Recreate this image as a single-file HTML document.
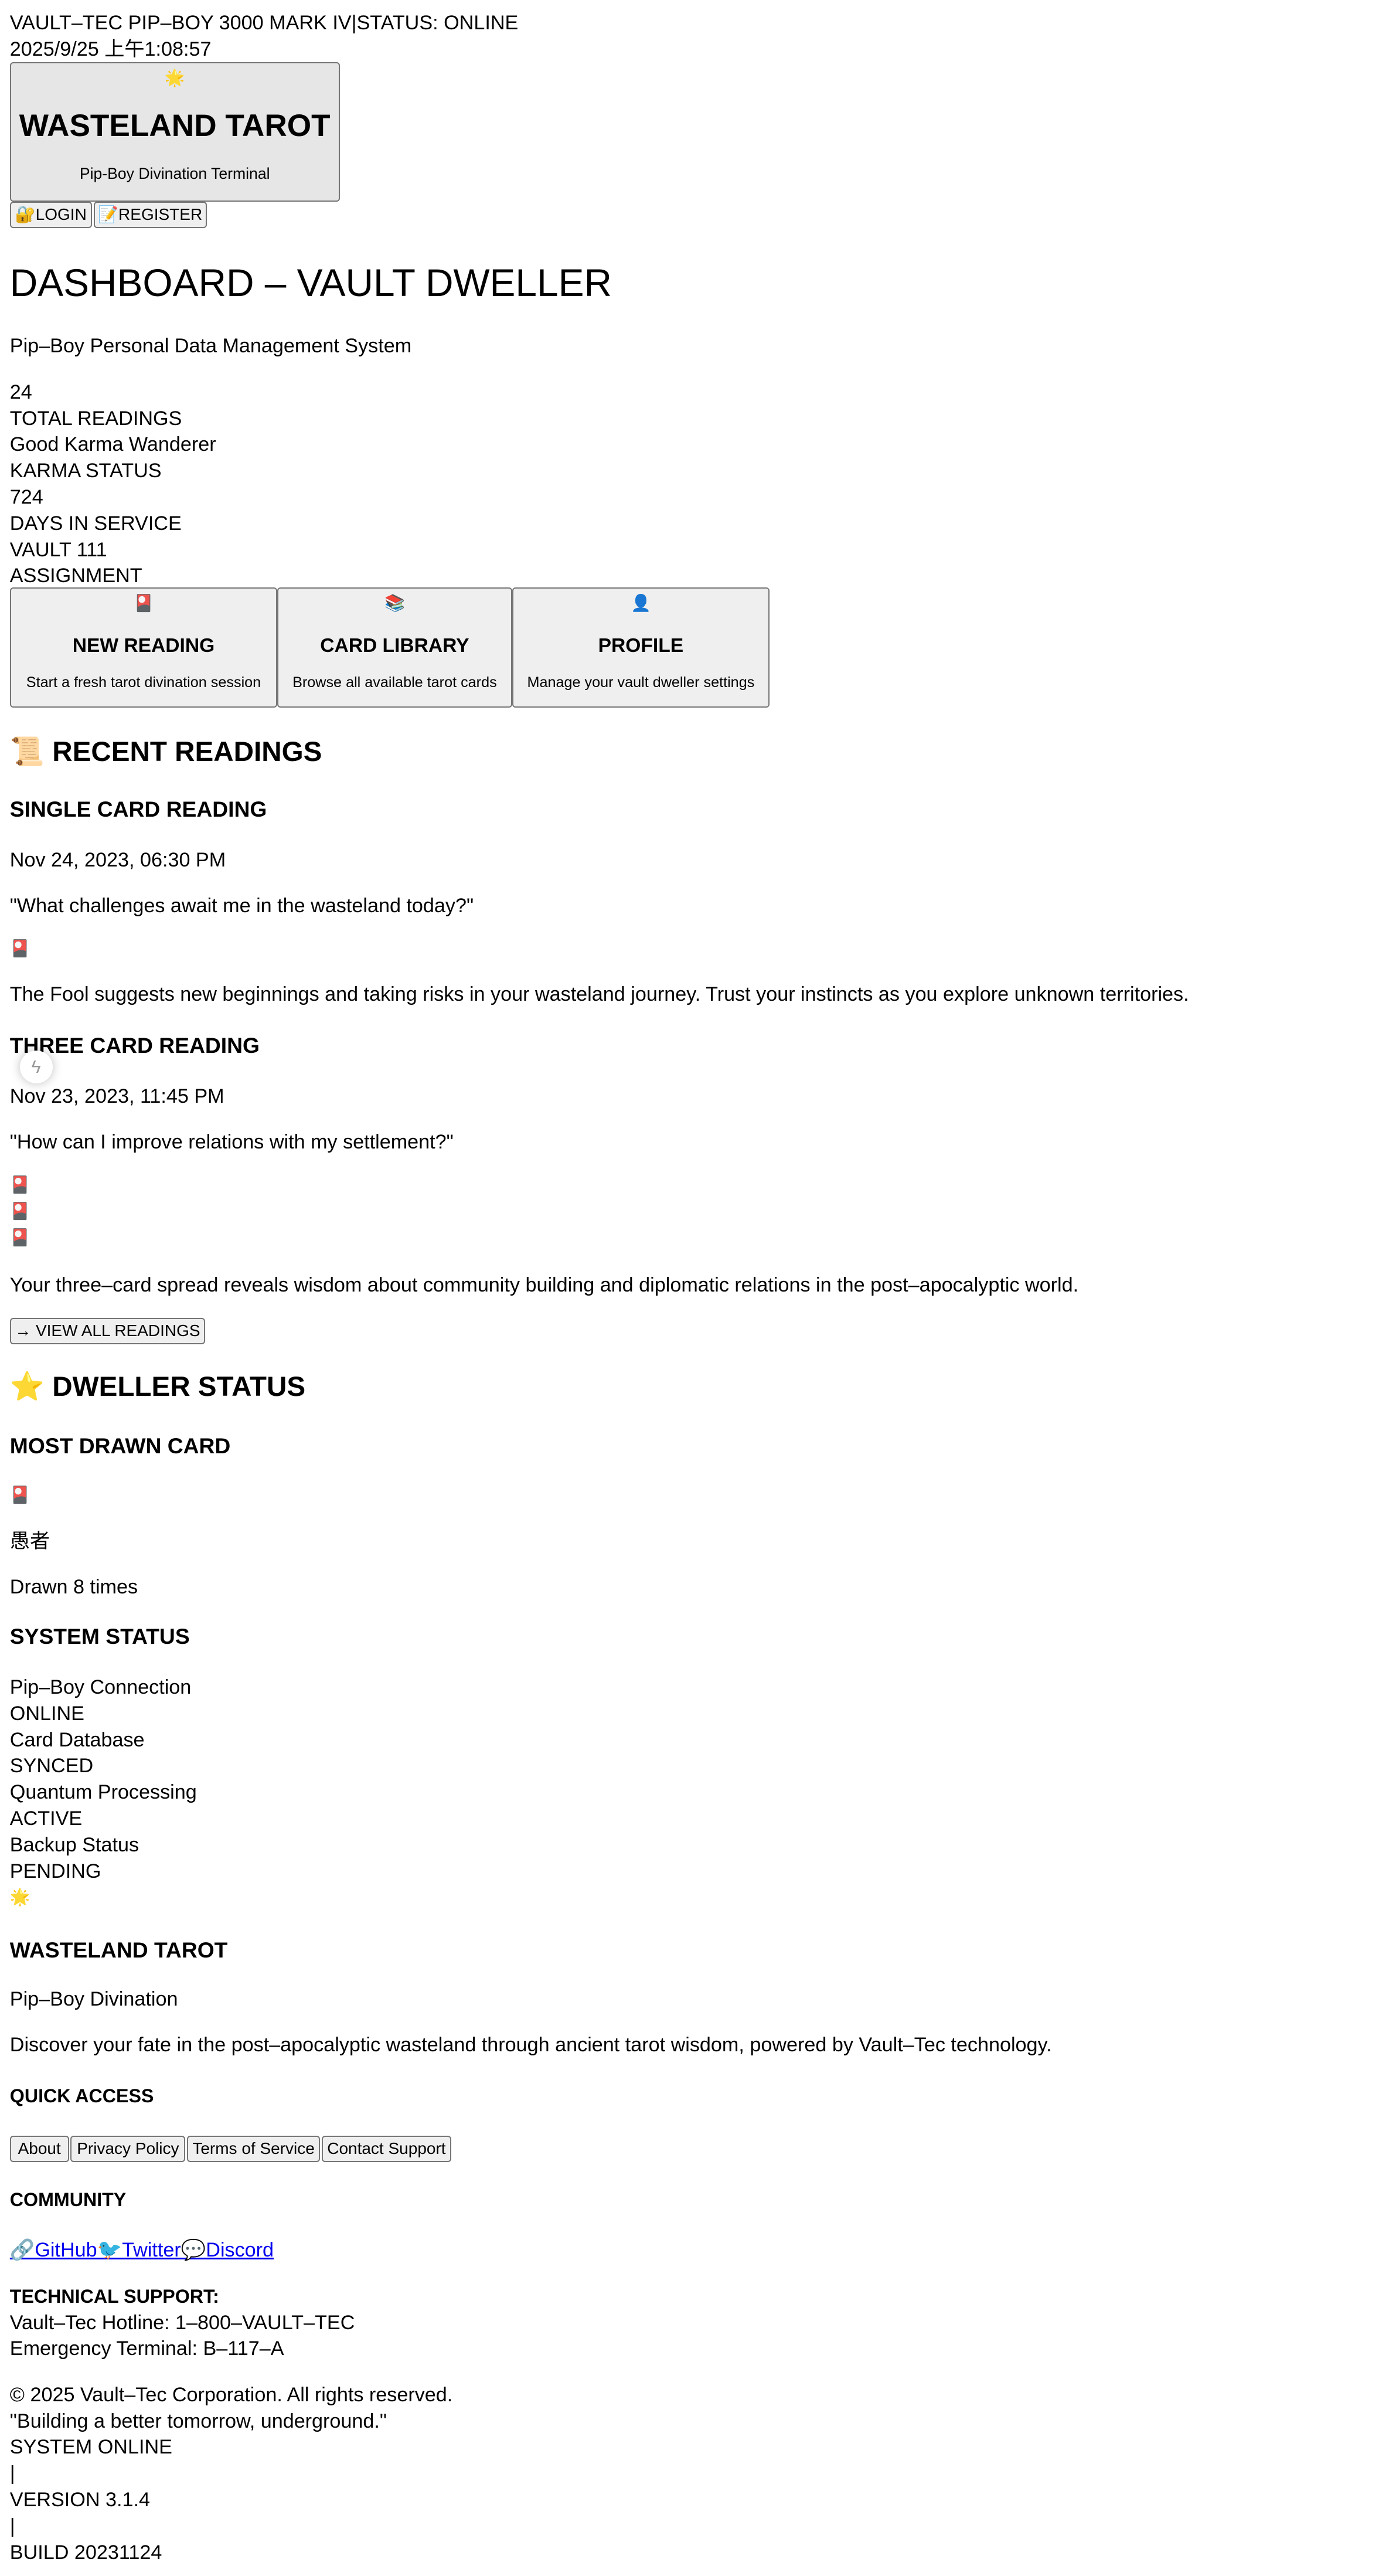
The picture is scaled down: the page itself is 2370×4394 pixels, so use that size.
<!DOCTYPE html>
<html><head><meta charset="utf-8">
<style>
html,body{margin:0;padding:0;background:#fff}
#w{zoom:2.8;position:relative;width:846px;height:1569px;overflow:hidden;font-family:"Liberation Sans","Noto Sans CJK SC",sans-serif;color:#000;font-size:12.2px;line-height:16px}
.t{position:absolute;left:6px;white-space:nowrap;line-height:16px}
.box{position:absolute;background:#efefef;border:1px solid #767676;border-radius:2px;box-sizing:border-box;text-align:center}
.h3{font-weight:bold;font-size:13.3px}
.h2{font-weight:bold;font-size:17px;line-height:22px}
.btn{position:absolute;top:0;height:16px;background:#efefef;border:1px solid #767676;border-radius:2px;box-sizing:border-box;font-size:10px;line-height:14px;text-align:center;white-space:nowrap;overflow:hidden}
a{color:#00e;text-decoration:underline}
.e{font-size:10px}
</style></head><body><div id="w">
<div class="t" style="top:6px">VAULT–TEC PIP–BOY 3000 MARK IV|STATUS: ONLINE</div>
<div class="t" style="top:22px">2025/9/25 上午1:08:57</div>
<div class="box" style="left:6px;top:38px;width:201px;height:85px;background:#e6e6e6">
 <div style="position:absolute;top:1px;left:0;right:0;font-size:10px">🌟</div>
 <div style="position:absolute;top:26px;left:0;right:0;font-size:19px;font-weight:bold;line-height:24px">WASTELAND TAROT</div>
 <div style="position:absolute;top:59px;left:0;right:0;font-size:9.5px">Pip-Boy Divination Terminal</div>
</div>
<div style="position:absolute;top:123px;left:6px">
 <div class="btn" style="left:0;width:50px">🔐LOGIN</div>
 <div class="btn" style="left:51px;width:69px">📝REGISTER</div>
</div>
<div class="t" style="top:157px;font-size:23.5px;line-height:30px">DASHBOARD – VAULT DWELLER</div>
<div class="t" style="top:203px">Pip–Boy Personal Data Management System</div>
<div class="t" style="top:231px">24<br>TOTAL READINGS<br>Good Karma Wanderer<br>KARMA STATUS<br>724<br>DAYS IN SERVICE<br>VAULT 111<br>ASSIGNMENT</div>
<div class="box" style="left:6px;top:358px;width:163px;height:73px"><div style="font-size:10px;margin-top:1px">🎴</div><div style="font-weight:bold;font-size:12px;margin-top:10px">NEW READING</div><div style="font-size:9px;margin-top:6px">Start a fresh tarot divination session</div></div>
<div class="box" style="left:169px;top:358px;width:143px;height:73px"><div style="font-size:10px;margin-top:1px">📚</div><div style="font-weight:bold;font-size:12px;margin-top:10px">CARD LIBRARY</div><div style="font-size:9px;margin-top:6px">Browse all available tarot cards</div></div>
<div class="box" style="left:312px;top:358px;width:157px;height:73px"><div style="font-size:10px;margin-top:1px">👤</div><div style="font-weight:bold;font-size:12px;margin-top:10px">PROFILE</div><div style="font-size:9px;margin-top:6px">Manage your vault dweller settings</div></div>
<div class="t h2" style="top:447px">📜 RECENT READINGS</div>
<div class="t h3" style="top:485px">SINGLE CARD READING</div>
<div class="t" style="top:516px">Nov 24, 2023, 06:30 PM</div>
<div class="t" style="top:544px">"What challenges await me in the wasteland today?"</div>
<div class="t e" style="top:570px">🎴</div>
<div class="t" style="top:598px">The Fool suggests new beginnings and taking risks in your wasteland journey. Trust your instincts as you explore unknown territories.</div>
<div class="t h3" style="top:629px">THREE CARD READING</div>
<div class="t" style="top:660px">Nov 23, 2023, 11:45 PM</div>
<div class="t" style="top:688px">"How can I improve relations with my settlement?"</div>
<div class="t e" style="top:714px">🎴<br>🎴<br>🎴</div>
<div class="t" style="top:775px">Your three–card spread reveals wisdom about community building and diplomatic relations in the post–apocalyptic world.</div>
<div style="position:absolute;top:803px;left:6px"><div class="btn" style="left:0;width:119px">→ VIEW ALL READINGS</div></div>
<div class="t h2" style="top:834px">⭐ DWELLER STATUS</div>
<div class="t h3" style="top:873px">MOST DRAWN CARD</div>
<div class="t e" style="top:903px">🎴</div>
<div class="t" style="top:931px">愚者</div>
<div class="t" style="top:959px">Drawn 8 times</div>
<div class="t h3" style="top:989px">SYSTEM STATUS</div>
<div class="t" style="top:1020px">Pip–Boy Connection<br>ONLINE<br>Card Database<br>SYNCED<br>Quantum Processing<br>ACTIVE<br>Backup Status<br>PENDING</div>
<div class="t e" style="top:1148px">🌟</div>
<div class="t h3" style="top:1180px">WASTELAND TAROT</div>
<div class="t" style="top:1210px">Pip–Boy Divination</div>
<div class="t" style="top:1238px">Discover your fate in the post–apocalyptic wasteland through ancient tarot wisdom, powered by Vault–Tec technology.</div>
<div class="t" style="top:1269px;font-weight:bold;font-size:11.5px">QUICK ACCESS</div>
<div style="position:absolute;top:1301px;left:6px">
 <div class="btn" style="left:0;width:36px">About</div>
 <div class="btn" style="left:37px;width:70px">Privacy Policy</div>
 <div class="btn" style="left:108px;width:81px">Terms of Service</div>
 <div class="btn" style="left:190px;width:79px">Contact Support</div>
</div>
<div class="t" style="top:1332px;font-weight:bold;font-size:11.5px">COMMUNITY</div>
<div class="t" style="top:1363px"><a>🔗GitHub🐦Twitter💬Discord</a></div>
<div class="t" style="top:1391px;font-weight:bold;font-size:11.5px">TECHNICAL SUPPORT:</div>
<div class="t" style="top:1407px">Vault–Tec Hotline: 1–800–VAULT–TEC<br>Emergency Terminal: B–117–A</div>
<div class="t" style="top:1451px">© 2025 Vault–Tec Corporation. All rights reserved.<br>"Building a better tomorrow, underground."<br>SYSTEM ONLINE<br>|<br>VERSION 3.1.4<br>|<br>BUILD 20231124</div>
<div style="position:absolute;left:12px;top:640px;width:20px;height:20px;border-radius:50%;background:#fff;box-shadow:0 0 6px rgba(0,0,0,.25);text-align:center;font-size:11px;line-height:20px;color:#999">ϟ</div>
</div></body></html>
